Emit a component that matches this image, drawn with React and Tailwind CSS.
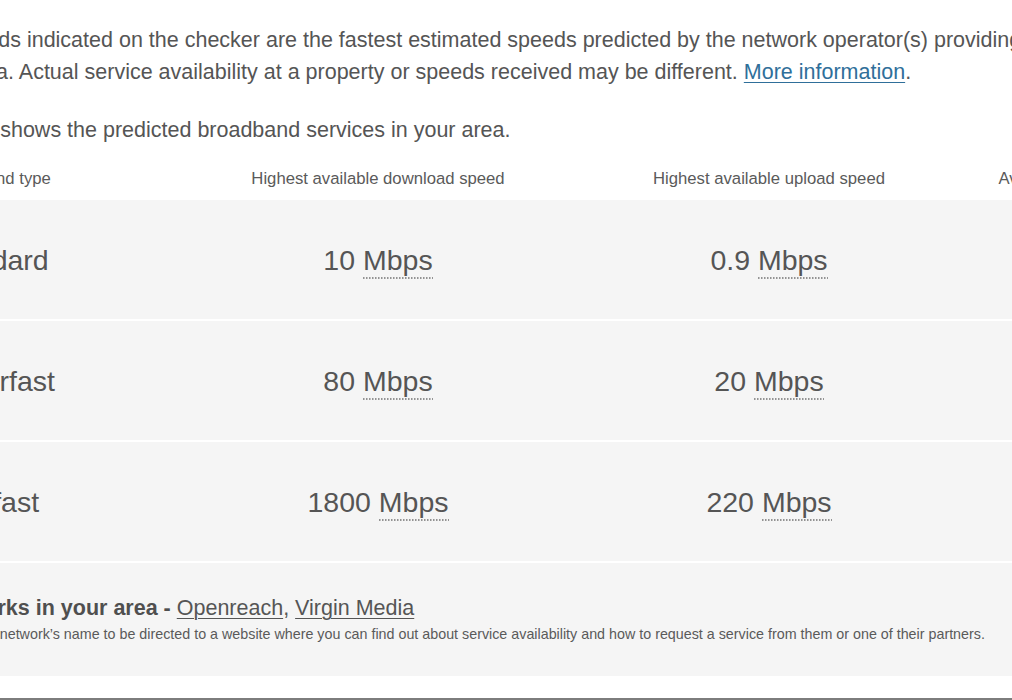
import React from "react";

const cols = "grid grid-cols-[249.5px_391px_391px_391px]";

function Mbps({ value }) {
  return (
    <span>
      {value}{" "}
      <span className="pb-[3px] bg-[linear-gradient(to_right,#5f5f5f_1.5px,transparent_1.5px)] bg-[length:3px_2px] bg-bottom bg-repeat-x">
        Mbps
      </span>
    </span>
  );
}

const rows = [
  { type: "Standard", down: "10", up: "0.9" },
  { type: "Superfast", down: "80", up: "20" },
  { type: "Ultrafast", down: "1800", up: "220" },
];

export default function App() {
  return (
    <div className="w-[1012px] h-[700px] overflow-hidden bg-white font-['Liberation_Sans',Arial,sans-serif] text-[#555555]">
      <div className="ml-[-67px] w-[1500px]">
        <div className="pt-[24px] text-[21.5px] leading-[32px]">
          <p className="whitespace-nowrap ml-[15px]">
            Speeds indicated on the checker are the fastest estimated speeds predicted by the network operator(s) providing services in your area.
          </p>
          <p className="whitespace-nowrap ml-[32px]">
            area. Actual service availability at a property or speeds received may be different.{" "}
            <a href="#" className="text-[#2f6f9a] underline decoration-1 underline-offset-[3px]">More information</a>.
          </p>
          <p className="whitespace-nowrap mt-[26px] ml-[-32px]">
            This table shows the predicted broadband services in your area.
          </p>
        </div>

        <div className={`${cols} mt-[21px] h-[33px] text-[16.7px] leading-[24px] text-[#5a5a5a]`}>
          <div className="text-left">Broadband type</div>
          <div className="text-center">Highest available download speed</div>
          <div className="text-center">Highest available upload speed</div>
          <div className="text-left pl-[34px] whitespace-nowrap">Availability</div>
        </div>

        {rows.map((r) => (
          <div
            key={r.type}
            className={`${cols} h-[121px] items-center bg-[#f5f5f5] border-b-2 border-white text-[28.5px] leading-[32px] text-[#555555]`}
          >
            <div className="text-left">{r.type}</div>
            <div className="text-center"><Mbps value={r.down} /></div>
            <div className="text-center"><Mbps value={r.up} /></div>
            <div></div>
          </div>
        ))}

        <div className="h-[113px] bg-[#f5f5f5] pt-[31px]">
          <p className="text-[21.5px] leading-[28px] whitespace-nowrap">
            <span className="font-bold text-[#4f4f4f]">Networks in your area - </span>
            <a href="#" className="underline decoration-1 underline-offset-[3px]">Openreach</a>,{" "}
            <a href="#" className="underline decoration-1 underline-offset-[3px]">Virgin Media</a>
          </p>
          <p className="mt-[2px] text-[14.3px] leading-[20px] whitespace-nowrap text-[#5a5a5a]">
            Click on a network’s name to be directed to a website where you can find out about service availability and how to request a service from them or one of their partners.
          </p>
        </div>

        <div className="mt-[22px] h-[2px] bg-[#7d7d7d]"></div>
      </div>
    </div>
  );
}
